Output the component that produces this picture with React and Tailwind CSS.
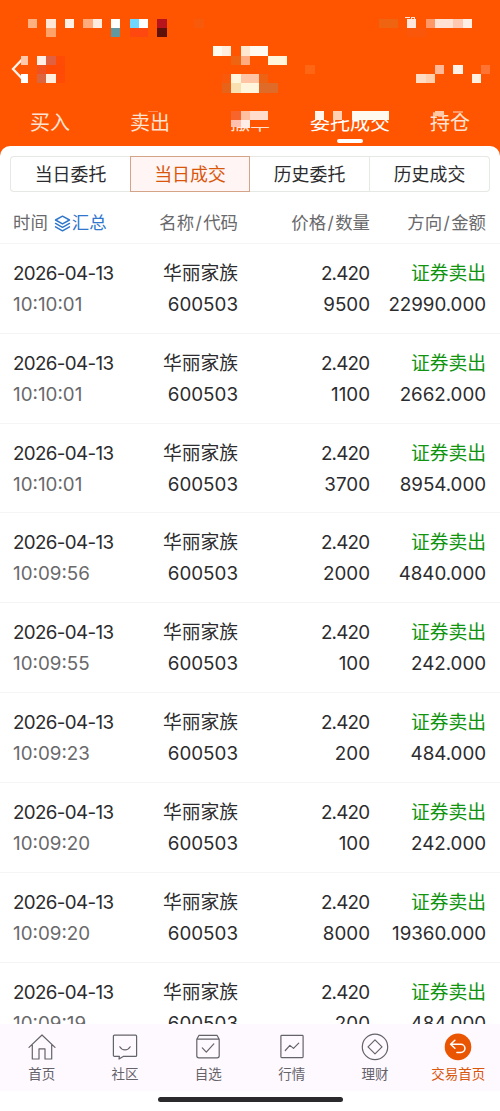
import { useState } from "react";

const tabs = ["买入", "卖出", "撤单", "委托成交", "持仓"];
const segments = ["当日委托", "当日成交", "历史委托", "历史成交"];
const columns = [["名称", "代码"], ["价格", "数量"], ["方向", "金额"]];

const trades = [
    { time: "10:10:01", amount: "9500", total: "22990.000" },
    { time: "10:10:01", amount: "1100", total: "2662.000" },
    { time: "10:10:01", amount: "3700", total: "8954.000" },
    { time: "10:09:56", amount: "2000", total: "4840.000" },
    { time: "10:09:55", amount: "100", total: "242.000" },
    { time: "10:09:23", amount: "200", total: "484.000" },
    { time: "10:09:20", amount: "100", total: "242.000" },
    { time: "10:09:20", amount: "8000", total: "19360.000" },
    { time: "10:09:19", amount: "200", total: "484.000" },
];

// privacy mosaic: [column, row, colour, columns wide]
const CELL = 9.25;
const mosaic = [
    [3, 2, "#ffb080"], [5, 2, "#ffe6d5"], [7, 2, "#fff0e6"], [9, 2, "#ffab7c"], [10, 2, "#ffece0"],
    [12, 2, "#ffffff"], [14, 2, "#6fd6ff"], [15, 2, "#ffffff"], [17, 2, "#b8141e"], [21, 2, "#f85a0c"],
    [41, 2, "#ee6410", 2], [44, 2, "#ffe6dc"], [46, 2, "#ff9866"], [47, 2, "#ffe2d4", 2],
    [49, 2, "#ffc8b0"], [50, 2, "#ffeee4"],
    [5, 3, "#ffa26a"], [12, 3, "#5f98a0"], [14, 3, "#ff4810", 2], [17, 3, "#5c1208"], [44, 3, "#fb570a", 2],
    [23, 5, "#fffaf0"], [24, 5, "#ffeedd"], [26, 5, "#ffe8d0"], [27, 5, "#fffaf2", 2],
    [25, 6, "#ee6410"], [26, 6, "#ffad80"], [29, 6, "#fff6dc", 2],
    [4, 6, "#ffeee5"], [5, 6, "#e0603f"], [6, 6, "#ff4b05"],
    [4, 7, "#f0521f"], [5, 7, "#ff4a05", 2], [33, 7, "#ff6614"],
    [47, 7, "#ffb898"], [49, 7, "#fff0e8"], [52, 7, "#ff7433"],
    [4, 8, "#dd653d"], [5, 8, "#ffeedd"], [6, 8, "#ff4b05"],
    [24, 8, "#f9590a"], [25, 8, "#fff6dc"], [26, 8, "#ffc4a4", 2], [28, 8, "#ee6214"],
    [45, 8, "#ffdcc4"], [46, 8, "#ffcfae"], [51, 8, "#fff0e0"],
    [24, 9, "#e8631a"], [25, 9, "#f8e0b0"], [26, 9, "#fff5dd", 2], [28, 9, "#e06a28", 2],
    [24, 12, "#ff5500"], [25, 12, "#f8652c"], [26, 12, "#ffc0a0"], [27, 12, "#ffdccc", 2], [29, 12, "#ff5500", 2],
    [33, 12, "#ff5500"], [34, 12, "#fff5ec"], [35, 12, "#ff5500"], [36, 12, "#ffd0b4"], [37, 12, "#ff5500"],
    [38, 12, "#fffaf0", 4],
];

function Mosaic() {
    return (
        <svg className="absolute left-0 top-0" width="500" height="146" shapeRendering="crispEdges">
            {mosaic.map(([col, row, fill, span = 1], i) => (
                <rect key={i} x={col * CELL} y={row * CELL} width={span * CELL} height={CELL} fill={fill} />
            ))}
            <rect x="21" y="55.5" width="6.75" height="9.25" fill="#ffc8aa" />
            <rect x="21" y="74" width="6.75" height="9.25" fill="#ffffff" />
            <rect x="222" y="120" width="55" height="7" fill="#ff5500" />
            <rect x="231.25" y="120.25" width="9.25" height="7" fill="#ffc0b0" />
            <rect x="240.5" y="120.25" width="9.25" height="7.5" fill="#ffeee8" />
            <rect x="434.75" y="111" width="9.25" height="5" fill="#ffc8a8" />
            <rect x="453.25" y="111" width="9.25" height="2" fill="#ff9866" />
            <rect x="148" y="111" width="10" height="1" fill="#ff8a55" />
            <path d="M405 17.5h5M411 18.5q2-2 4 0" stroke="#ffe6dc" fill="none" />
        </svg>
    );
}

function LayersIcon() {
    return (
        <svg width="17" height="17" viewBox="0 0 17 17" fill="none" stroke="#2f76cc" strokeWidth="1.45" strokeLinejoin="round" strokeLinecap="round">
            <path d="m8.5 1.2 7 3.8-7 3.9-7-3.9Z" />
            <path d="m1.5 8.4 7 3.9 7-3.9M1.5 11.8l7 4 7-4" />
        </svg>
    );
}

const iconProps = { width: 28, height: 28, viewBox: "0 0 28 28", fill: "none", stroke: "#65636a", strokeWidth: 1.2, strokeLinejoin: "round", strokeLinecap: "round" };

const navItems = [
    {
        label: "首页",
        icon: (
            <svg {...iconProps}>
                <path d="M1 14.4 14 2l13 12.4M4.3 12v14H11V15.8h6V26h6.7V12" />
            </svg>
        ),
    },
    {
        label: "社区",
        icon: (
            <svg {...iconProps}>
                <path d="M3.4 2.2h21.2a1 1 0 0 1 1 1v19.2a1 1 0 0 1-1 1H12.2L8 26l.4-2.6h-5a1 1 0 0 1-1-1V3.2a1 1 0 0 1 1-1Z" />
                <path d="M8.8 13.8c2.4 4.2 8 4.2 10.4 0" />
            </svg>
        ),
    },
    {
        label: "自选",
        icon: (
            <svg {...iconProps}>
                <path d="M2.8 6.2 5 2.3h18l2.2 3.9v16.6a2 2 0 0 1-2 2H4.8a2 2 0 0 1-2-2ZM2.8 6.2h22.4" />
                <path d="m8.3 14.9 4 4.2 7.5-8.2" />
            </svg>
        ),
    },
    {
        label: "行情",
        icon: (
            <svg {...iconProps}>
                <rect x="2.9" y="2.4" width="22.2" height="22.2" rx="0.8" />
                <path d="m7.3 17.5 4.6-5.1 3.6 3 5.2-5.3" />
            </svg>
        ),
    },
    {
        label: "理财",
        icon: (
            <svg {...iconProps}>
                <circle cx="14" cy="13.9" r="12.7" />
                <path d="m14 6.9 7 7-7 7-7-7Z" />
            </svg>
        ),
    },
    {
        label: "交易首页",
        active: true,
        icon: (
            <svg {...iconProps} stroke="#fff" strokeWidth="1.5">
                <circle cx="14" cy="13.9" r="13.3" fill="#ea5504" stroke="none" />
                <path d="M10.9 7.2 6.6 11.2l4.3 4M6.8 11.2h10a4 4 0 0 1 0 8.3h-3.9" />
            </svg>
        ),
    },
];

function TradeRow({ trade }) {
    return (
        <div className="grid h-[89.83px] shrink-0 grid-cols-[120px_105px_132px_116px] border-t border-[#f5f5f5] pl-[13px] pt-[14px] text-[18.8px] leading-[31px] text-[#2c2c2e]">
            <div>
                <p className="tracking-[-0.65px]">2026-04-13</p>
                <p className="text-[#69696b]">{trade.time}</p>
            </div>
            <div className="text-right">
                <p>华丽家族</p>
                <p>600503</p>
            </div>
            <div className="text-right">
                <p className="mr-[0.8px] tracking-[-0.8px]">2.420</p>
                <p>{trade.amount}</p>
            </div>
            <div className="text-right">
                <p className="text-[#109410]">证券卖出</p>
                <p className="tracking-[-0.05px]">{trade.total}</p>
            </div>
        </div>
    );
}

function App() {
    const [tab, setTab] = useState("委托成交");
    const [segment, setSegment] = useState("当日成交");

    return (
        <div className="flex h-[1111px] w-[500px] flex-col overflow-hidden bg-white font-['Inter','Noto_Sans_CJK_SC',sans-serif]">
            <header className="relative h-[146px] shrink-0 bg-[#ff5500]">
                <div className="flex h-full flex-col justify-between">
                    <button className="ml-[11px] mt-[58px] w-4">
                        <svg width="16" height="22" viewBox="0 0 16 22" fill="none" stroke="#fff4ec" strokeWidth="2.3">
                            <path d="M11 1.5 2 11l9 9.5" />
                        </svg>
                    </button>
                    <nav className="grid grid-cols-5">
                        {tabs.map((name) => (
                            <button
                                key={name}
                                onClick={() => setTab(name)}
                                className={`flex h-[38px] flex-col items-center whitespace-nowrap pt-px text-[20px] leading-[29px] ${name === tab ? "text-white" : "text-[#ffe3d2]"}`}
                            >
                                {name}
                                {name === tab && <span className="mt-[0.5px] h-1 w-[26px] shrink-0 rounded-full bg-white" />}
                            </button>
                        ))}
                    </nav>
                </div>
                <Mosaic />
            </header>

            <div className="shrink-0 bg-[#ff5500]">
                <div className="h-[97px] rounded-t-[10px] bg-white px-[10px] pt-[10px]">
                    <div className="grid h-9 grid-cols-4">
                        {segments.map((name) => (
                            <button
                                key={name}
                                onClick={() => setSegment(name)}
                                className={`border pt-px text-[17.9px] leading-[33px] ${name === segment ? "border-[#d3a488] bg-[#fff5f5] text-[#d9560b]" : "border-[#e6e8e3] text-[#2c2c2e] not-first:border-l-0 first:rounded-l-sm first:border-r-0 last:rounded-r-sm"}`}
                            >
                                {name}
                            </button>
                        ))}
                    </div>
                    <div className="-ml-[10px] mt-[9px] grid grid-cols-[120px_105px_132px_116px] pl-[13px] text-[17.4px] leading-[44px] text-[#69696b]">
                        <div className="flex items-center whitespace-nowrap">
                            时间
                            <span className="ml-[6px] flex items-center gap-[1px] text-[#2f76cc]">
                                <LayersIcon />
                                汇总
                            </span>
                        </div>
                        {columns.map(([top, bottom]) => (
                            <span key={top} className="text-right">
                                {top}
                                <span className="px-[1.4px]">/</span>
                                {bottom}
                            </span>
                        ))}
                    </div>
                </div>
            </div>

            <main className="flex h-[781px] shrink-0 flex-col overflow-hidden">
                {trades.map((trade, i) => (
                    <TradeRow key={i} trade={trade} />
                ))}
            </main>

            <footer className="grid h-[67px] shrink-0 grid-cols-6 bg-[#fdf9fe] pt-[9px]">
                {navItems.map((item) => (
                    <button
                        key={item.label}
                        className={`flex flex-col items-center whitespace-nowrap text-[13.5px] leading-[20px] ${item.active ? "text-[#d9560b]" : "text-[#65636a]"}`}
                    >
                        {item.icon}
                        <span className="mt-[3px]">{item.label}</span>
                    </button>
                ))}
            </footer>
            <div className="flex justify-center pt-[6px]">
                <span className="h-[5px] w-[185px] rounded-full bg-[#2b2b2d]" />
            </div>
        </div>
    );
}

export default App;
